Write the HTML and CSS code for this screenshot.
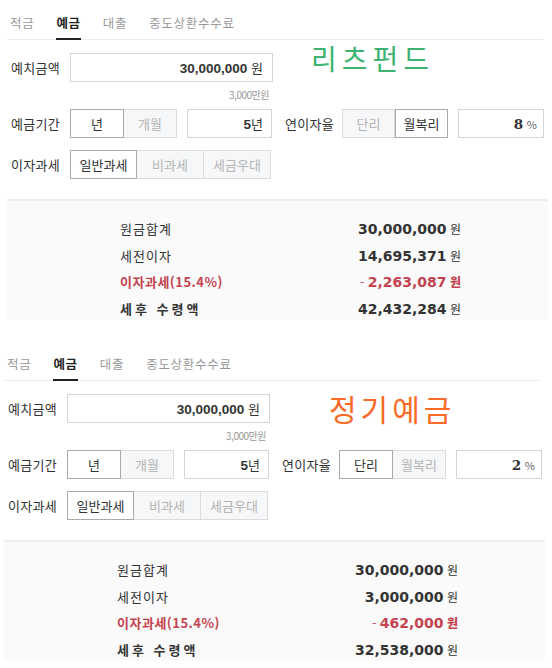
FILE: index.html
```html
<!DOCTYPE html>
<html lang="ko">
<head>
    <meta charset="UTF-8">
    <meta name="viewport" content="width=device-width, initial-scale=1.0">
    <title>예금 계산기</title>
    <link rel="stylesheet" href="styles.css">
</head>
<body>

<div class="calc calc-first">
    <ul class="tabs">
        <li>적금</li>
        <li class="on">예금</li>
        <li>대출</li>
        <li>중도상환수수료</li>
    </ul>

    <div class="memo memo-green">리츠펀드</div>

    <div class="form">
        <div class="row">
            <span class="label">예치금액</span>
            <div class="field field-wide"><b>30,000,000</b> 원</div>
        </div>
        <div class="note">3,000만원</div>

        <div class="row row-period">
            <span class="label">예금기간</span>
            <div class="seg">
                <span class="on">년</span>
                <span>개월</span>
            </div>
            <div class="field field-small"><b>5</b>년</div>
            <span class="label label-rate">연이자율</span>
            <div class="seg">
                <span>단리</span>
                <span class="on">월복리</span>
            </div>
            <div class="field field-rate"><b>8</b> <small>%</small></div>
        </div>

        <div class="row row-tax">
            <span class="label">이자과세</span>
            <div class="seg seg-three">
                <span class="on">일반과세</span>
                <span>비과세</span>
                <span>세금우대</span>
            </div>
        </div>
    </div>

    <div class="summary">
        <dl>
            <dt>원금합계</dt>
            <dd><b>30,000,000</b> 원</dd>
            <dt>세전이자</dt>
            <dd><b>14,695,371</b> 원</dd>
            <dt class="tax">이자과세(15.4%)</dt>
            <dd class="tax"><i>-</i> <b>2,263,087</b> <b>원</b></dd>
            <dt class="total">세후 수령액</dt>
            <dd><b>42,432,284</b> 원</dd>
        </dl>
    </div>
</div>

<div class="calc calc-second">
    <ul class="tabs">
        <li>적금</li>
        <li class="on">예금</li>
        <li>대출</li>
        <li>중도상환수수료</li>
    </ul>

    <div class="memo memo-orange">정기예금</div>

    <div class="form">
        <div class="row">
            <span class="label">예치금액</span>
            <div class="field field-wide"><b>30,000,000</b> 원</div>
        </div>
        <div class="note">3,000만원</div>

        <div class="row row-period">
            <span class="label">예금기간</span>
            <div class="seg">
                <span class="on">년</span>
                <span>개월</span>
            </div>
            <div class="field field-small"><b>5</b>년</div>
            <span class="label label-rate">연이자율</span>
            <div class="seg">
                <span class="on">단리</span>
                <span>월복리</span>
            </div>
            <div class="field field-rate"><b>2</b> <small>%</small></div>
        </div>

        <div class="row row-tax">
            <span class="label">이자과세</span>
            <div class="seg seg-three">
                <span class="on">일반과세</span>
                <span>비과세</span>
                <span>세금우대</span>
            </div>
        </div>
    </div>

    <div class="summary">
        <dl>
            <dt>원금합계</dt>
            <dd><b>30,000,000</b> 원</dd>
            <dt>세전이자</dt>
            <dd><b>3,000,000</b> 원</dd>
            <dt class="tax">이자과세(15.4%)</dt>
            <dd class="tax"><i>-</i> <b>462,000</b> <b>원</b></dd>
            <dt class="total">세후 수령액</dt>
            <dd><b>32,538,000</b> 원</dd>
        </dl>
    </div>
</div>

</body>
</html>
```

FILE: styles.css
```css
body {
    margin: 0;
    background: #fff;
    color: #333;
    font-family: "Noto Sans CJK KR", "Liberation Sans", sans-serif;
    font-size: 13px;
}
.calc {
    position: relative;
    width: 541px;
}
.calc-first {
    margin-left: 7px;
    height: 322px;
}
.calc-second {
    margin-left: 4px;
    margin-top: 19px;
    height: 322px;
}
.tabs {
    display: flex;
    gap: 22px;
    margin: 0;
    padding: 0 0 0 3px;
    list-style: none;
    border-bottom: 1px solid #ececec;
    width: 533px;
}
.tabs li {
    padding: 14px 0 6px;
    line-height: 18px;
    font-size: 12.5px;
    letter-spacing: 0.7px;
    color: #999;
    border-bottom: 2px solid transparent;
    margin-bottom: -1px;
}
.tabs li.on {
    color: #222;
    font-weight: bold;
    border-bottom-color: #222;
}
.memo {
    position: absolute;
    line-height: 1;
    letter-spacing: 5px;
}
.memo-green {
    left: 304px;
    top: 44px;
    font-size: 28px;
    color: #3cb371;
}
.memo-orange {
    left: 325px;
    top: 52px;
    font-size: 30px;
    letter-spacing: 4px;
    color: #fb6a26;
}
.form {
    padding: 13px 0 0 4px;
}
.row {
    display: flex;
    align-items: center;
    height: 29px;
}
.label {
    width: 59px;
    line-height: 29px;
    color: #333;
    letter-spacing: 0.3px;
}
.field {
    box-sizing: border-box;
    height: 29px;
    line-height: 27px;
    border: 1px solid #d4d4d4;
    text-align: right;
    color: #333;
}
.field b {
    font-family: "Liberation Sans", sans-serif;
    font-size: 13.5px;
    color: #333;
}
.field-wide {
    width: 203px;
    padding-right: 9px;
}
.field-small {
    width: 85px;
    margin-left: 10px;
    padding-right: 8px;
}
.field-rate {
    width: 86px;
    margin-left: 10px;
    padding-right: 6px;
}
.field-rate b {
    font-family: "DejaVu Serif", serif;
}
.field-rate small {
    font-size: 11px;
    color: #666;
}
.note {
    width: 258px;
    margin-top: 6px;
    line-height: 14px;
    font-size: 10px;
    letter-spacing: -0.5px;
    text-align: right;
    color: #999;
}
.row-period {
    margin-top: 7px;
}
.label-rate {
    margin-left: 13px;
    width: 57px;
}
.row-tax {
    margin-top: 12px;
}
.seg {
    display: flex;
}
.seg span {
    box-sizing: border-box;
    width: 53px;
    height: 29px;
    line-height: 27px;
    text-align: center;
    background: #f6f7f8;
    border: 1px solid #dcdcdc;
    color: #b4b4b4;
}
.seg span + span {
    border-left: none;
}
.seg span.on {
    background: #fff;
    border: 1px solid #aaa;
    color: #333;
}
.seg span:first-child.on {
    width: 54px;
}
.seg span + span.on {
    border-left: 1px solid #aaa;
}
.seg-three span {
    width: 67px;
}
.seg-three span:first-child.on {
    width: 67px;
}
.summary {
    margin-top: 20px;
    border-top: 2px solid #eeeeee;
    background: #fafafa;
    height: 121px;
    padding-top: 15px;
    box-sizing: border-box;
}
.summary dl {
    display: grid;
    grid-template-columns: 120px 221px;
    margin: 0 0 0 113px;
    line-height: 25.7px;
}
.summary dt {
    color: #333;
    letter-spacing: 1px;
}
.summary dd {
    margin: 0;
    text-align: right;
    font-size: 12px;
    color: #333;
}
.summary dd b {
    font-family: "DejaVu Sans", sans-serif;
    font-size: 14px;
    color: #333;
}
.summary .tax {
    color: #c3434f;
    font-weight: bold;
    letter-spacing: 0.5px;
}
.summary dd.tax {
    letter-spacing: 0;
}
.summary dd.tax b {
    color: #c3434f;
}
.summary dd.tax b:last-child {
    font-family: "Noto Sans CJK KR", sans-serif;
    font-size: 12px;
}
.summary dd.tax i {
    font-style: normal;
    font-weight: normal;
    color: #c3434f;
}
.summary .total {
    font-weight: bold;
    letter-spacing: 3px;
}
```
